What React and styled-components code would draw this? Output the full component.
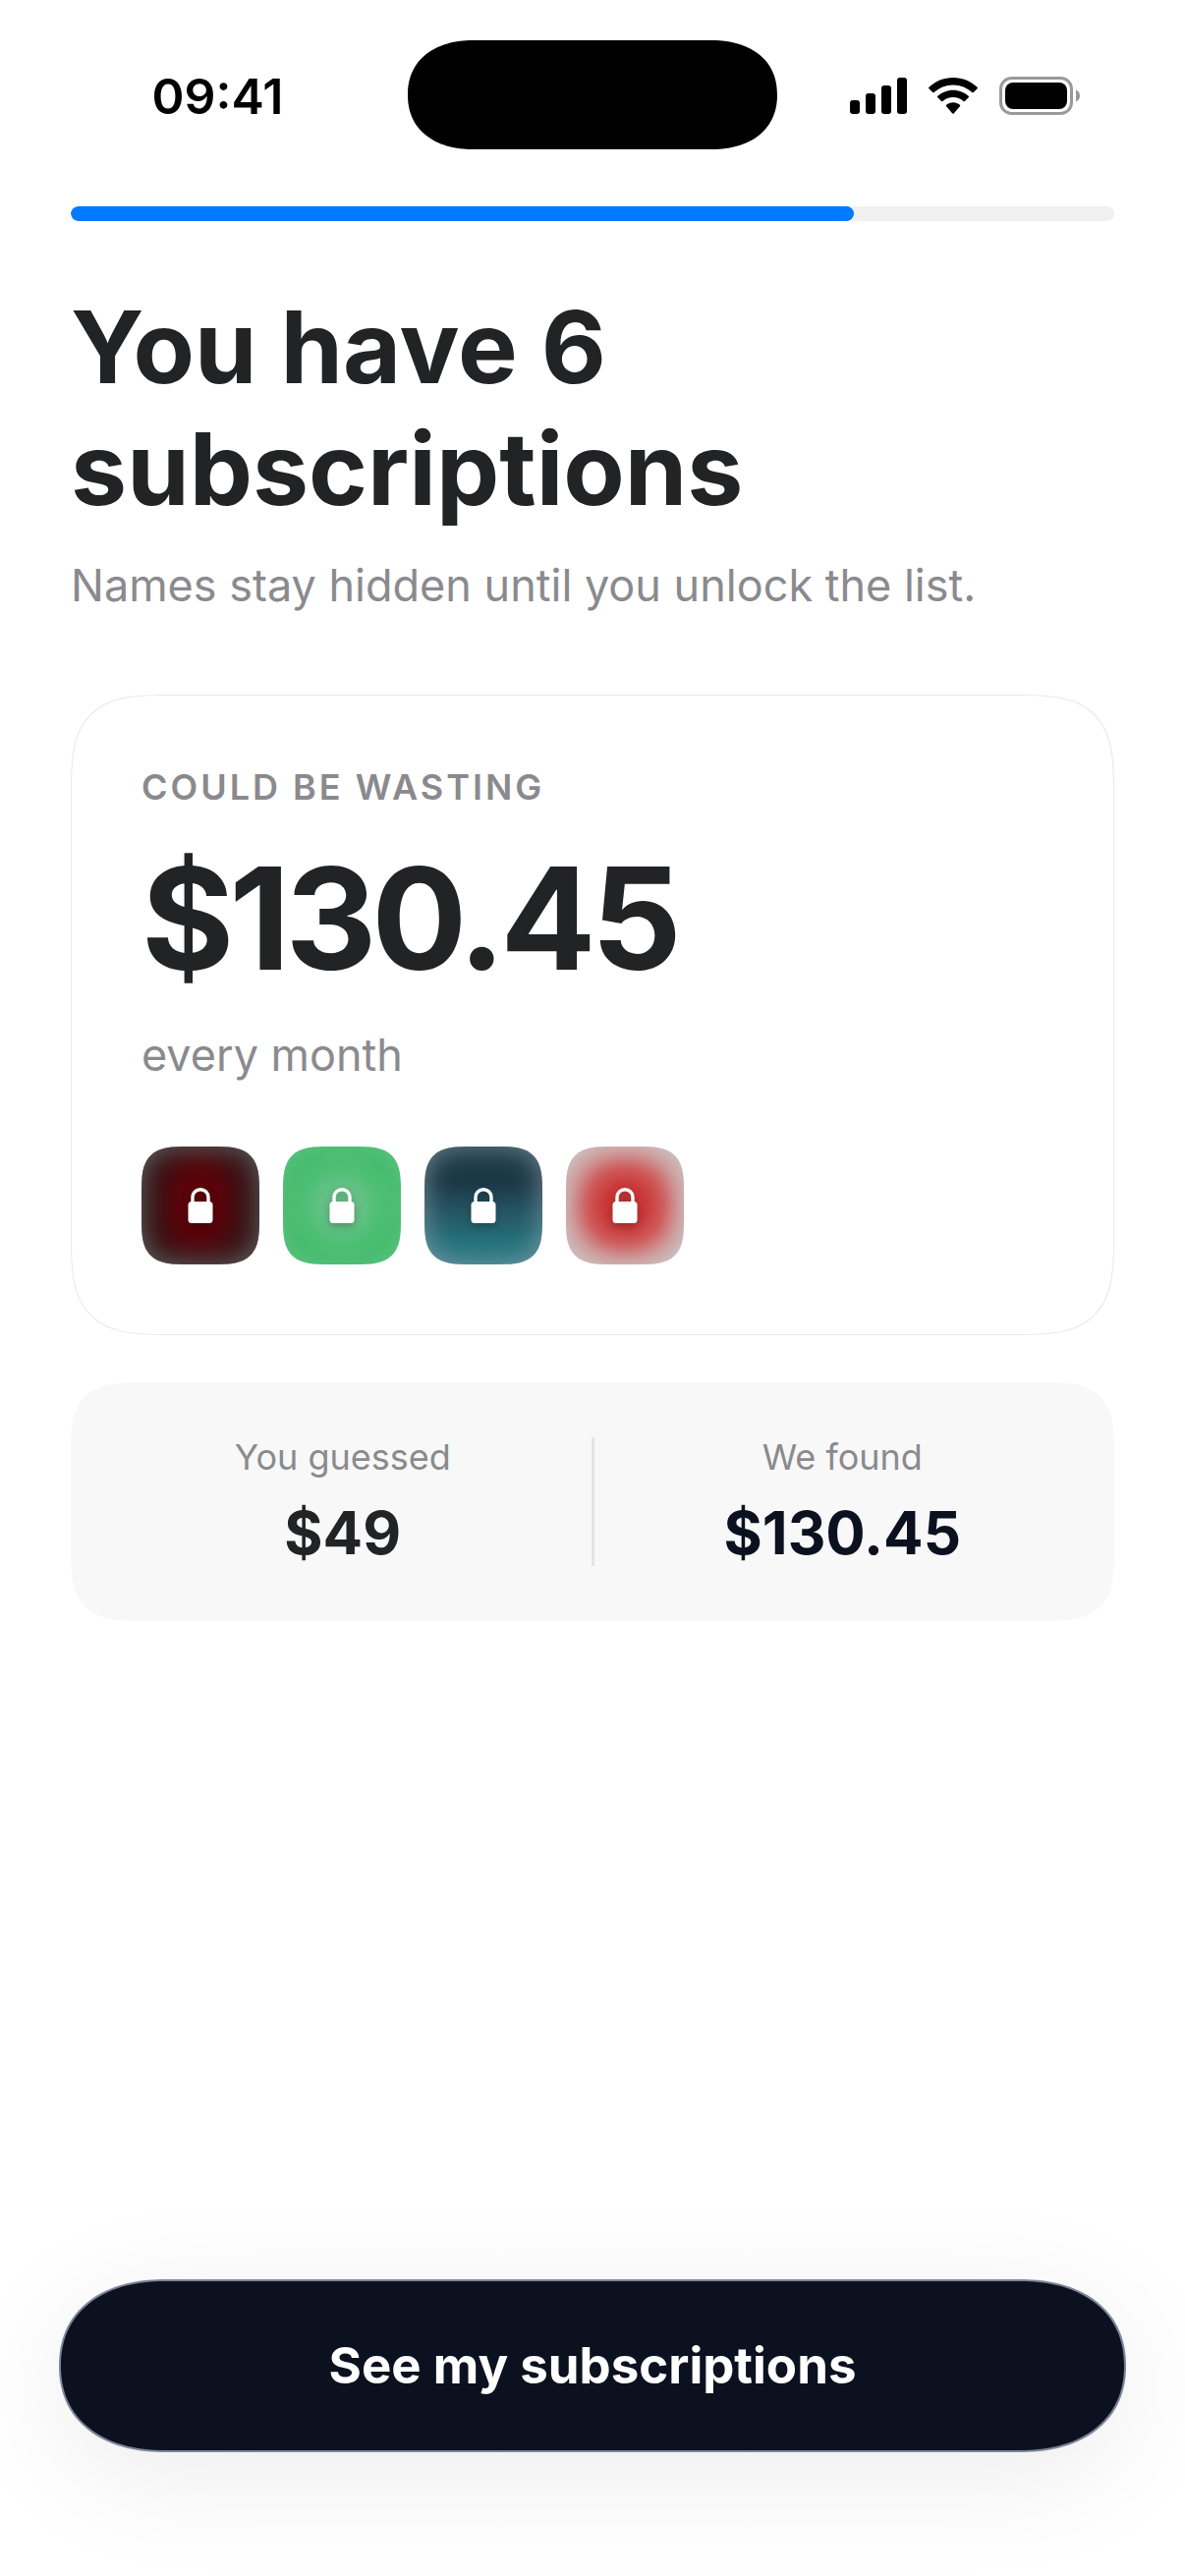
import React from "react";
import styled, { createGlobalStyle } from "styled-components";

const PROGRESS = 75;

const TILES = [
	{
		name: "first",
		fill: "radial-gradient(ellipse 44% 66% at 49% 48%, #5e0006 0%, #58040a 40%, #3e0d10 80%, #360f11 100%)",
		edge: "rgba(95, 105, 105, 1)",
	},
	{
		name: "second",
		fill: "radial-gradient(circle at 50% 50%, #70bf8b 0%, #62c184 26%, #4bbf72 50%, #42bb6b 68%, #48bf70 100%)",
		edge: "rgba(120, 200, 150, 0.5)",
	},
	{
		name: "third",
		fill: "linear-gradient(#1b3846 0%, #1b3846 30%, #265866 58%, #23707a 80%, #2a7883 100%)",
		edge: "rgba(150, 165, 175, 0.7)",
	},
	{
		name: "fourth",
		fill: "radial-gradient(circle at 50% 50%, #c6302f 0%, #cb3a3a 26%, #cf5a5a 46%, #cf9090 66%, #ccb6b6 86%)",
		edge: "rgba(204, 196, 196, 0.8)",
	},
];

const Signal = () => (
	<svg width="58" height="38" viewBox="0 0 58 38">
		<rect x="0" y="23" width="10" height="14" rx="3" />
		<rect x="16" y="16" width="10" height="21" rx="3" />
		<rect x="32" y="8" width="10" height="29" rx="3" />
		<rect x="48" y="0" width="10" height="37" rx="3" />
	</svg>
);

const Wifi = () => (
	<svg width="50" height="38" viewBox="0 0 50 38">
		<path d="M25 0C15.500 0 6.800 3.700 0.400 9.800Q-0.200 10.500 0.400 11.200L4.200 15Q4.900 15.600 5.600 15C10.700 10.300 17.500 7.400 25 7.400S39.300 10.300 44.400 15Q45.100 15.600 45.800 15L49.600 11.200Q50.200 10.500 49.600 9.800C43.200 3.700 34.500 0 25 0Z" />
		<path d="M25 12.700C19 12.700 13.500 15 9.300 18.800Q8.600 19.500 9.300 20.200L13.100 24Q13.800 24.600 14.500 24C17.300 21.500 21 20 25 20S32.700 21.500 35.500 24Q36.200 24.600 36.900 24L40.700 20.200Q41.400 19.500 40.700 18.800C36.500 15 31 12.700 25 12.700Z" />
		<path d="M25 25.200C22.400 25.200 20 26.100 18.100 27.700Q17.400 28.500 18.100 29.200L24.300 36.400Q25 37.100 25.700 36.400L31.900 29.200Q32.600 28.500 31.900 27.700C30 26.100 27.600 25.200 25 25.200Z" />
	</svg>
);

const Battery = () => (
	<svg width="82" height="39" viewBox="0 0 82 39">
		<rect x="1.500" y="1.500" width="72" height="36" rx="11" fill="none" stroke="#999999" strokeWidth="3" />
		<rect x="6" y="6" width="63" height="27" rx="8" />
		<path d="M78 13.500C80.500 14.500 82 16.800 82 19.500S80.500 24.500 78 25.500Z" fill="#999999" />
	</svg>
);

const Lock = () => (
	<svg width="26" height="36" viewBox="0 0 26 36">
		<path d="M5 16V9.500C5 5 8.500 1.700 13 1.700S21 5 21 9.500V16" fill="none" stroke="#fff" strokeWidth="3.400" />
		<rect x="0.500" y="14" width="25" height="22" rx="3.500" fill="#fff" />
	</svg>
);

const App = () => {
	return (
		<>
			<GlobalStyle />
			<Screen>
				<StatusBar>
					<Clock>09:41</Clock>
					<Island />
					<Indicators>
						<Signal />
						<Wifi />
						<Battery />
					</Indicators>
				</StatusBar>
				<Content>
					<Track role="progressbar" aria-valuenow={PROGRESS} aria-label="Progress">
						<Fill style={{ width: `${PROGRESS}%` }} />
					</Track>
					<Title>
						You have 6<br />
						subscriptions
					</Title>
					<Subtitle>Names stay hidden until you unlock the list.</Subtitle>
					<Card>
						<Label>COULD BE WASTING</Label>
						<Amount>$130.45</Amount>
						<Period>every month</Period>
						<Tiles>
							{TILES.map((tile) => (
								<Tile key={tile.name} $fill={tile.fill} $edge={tile.edge}>
									<Lock />
								</Tile>
							))}
						</Tiles>
					</Card>
					<Compare>
						<Side>
							<SideLabel>You guessed</SideLabel>
							<SideValue>$49</SideValue>
						</Side>
						<Divider />
						<Side>
							<SideLabel>We found</SideLabel>
							<SideValue $accent>$130.45</SideValue>
						</Side>
					</Compare>
				</Content>
				<Footer>
					<Button type="button">See my subscriptions</Button>
				</Footer>
			</Screen>
		</>
	);
};

export default App;

const GlobalStyle = createGlobalStyle`
	* {
		box-sizing: border-box;
		margin: 0;
		padding: 0;
	}
	body {
		background-color: #fff;
		font-family: Inter, "Liberation Sans", sans-serif;
		color: #222325;
	}
	svg {
		display: block;
	}
`;

const Screen = styled.div`
	min-height: 100vh;
	display: flex;
	flex-direction: column;
	overflow: hidden;
`;

const StatusBar = styled.header`
	display: grid;
	grid-template-columns: minmax(0, 1fr) 376px minmax(0, 1fr);
	align-items: center;
	padding-top: 41px;
`;

const Clock = styled.div`
	padding-top: 2px;
	padding-left: 28px;
	text-align: center;
	font-size: 50px;
	font-weight: 600;
	line-height: 60px;
	color: #000;
`;

const Island = styled.div`
	height: 111px;
	border-radius: 68px / 56px;
	corner-shape: superellipse(1.16);
	background-color: #000;
`;

const Indicators = styled.div`
	display: flex;
	align-items: center;
	gap: 22px;
	padding-top: 2px;
	padding-left: 74px;
`;

const Content = styled.main`
	flex: 1;
	padding: 58px 72px 0;
`;

const Track = styled.div`
	height: 15px;
	border-radius: 8px;
	background-color: #f0f0f0;
	overflow: hidden;
`;

const Fill = styled.div`
	height: 100%;
	border-radius: 8px;
	background-color: #007bff;
`;

const Title = styled.h1`
	margin-top: 66px;
	font-size: 102px;
	font-weight: 700;
	line-height: 124px;
`;

const Subtitle = styled.p`
	margin-top: 30px;
	font-size: 45px;
	line-height: 54px;
	color: #8a8a8e;
`;

const Card = styled.section`
	margin-top: 84px;
	padding: 71px;
	border: 1px solid #e9e9e9;
	border-radius: 104px;
	corner-shape: superellipse(1.7);
`;

const Label = styled.h2`
	font-size: 36px;
	font-weight: 600;
	line-height: 44px;
	letter-spacing: 3px;
	color: #8a8a8e;
`;

const Amount = styled.p`
	margin-top: 25px;
	font-size: 144px;
	font-weight: 700;
	line-height: 174px;
	letter-spacing: -5px;
`;

const Period = styled.p`
	margin-top: 25px;
	font-size: 45px;
	line-height: 54px;
	color: #8a8a8e;
`;

const Tiles = styled.div`
	display: flex;
	gap: 24px;
	margin-top: 66px;
`;

const Tile = styled.div`
	width: 120px;
	height: 120px;
	display: flex;
	justify-content: center;
	align-items: center;
	border-radius: 48px;
	corner-shape: superellipse(1.7);
	background: ${(props) => props.$fill};
	box-shadow: inset 0 0 28px ${(props) => props.$edge};
	svg {
		filter: drop-shadow(0 3px 4px rgba(0, 0, 0, 0.25));
	}
`;

const Compare = styled.section`
	display: flex;
	margin-top: 48px;
	padding: 54px 24px;
	border-radius: 76px;
	corner-shape: superellipse(1.7);
	background-color: #f8f8f8;
`;

const Side = styled.div`
	flex: 1;
	display: flex;
	flex-direction: column;
	align-items: center;
	gap: 19px;
`;

const SideLabel = styled.p`
	font-size: 36px;
	line-height: 44px;
	color: #8a8a8e;
`;

const SideValue = styled.p`
	font-size: 60px;
	font-weight: 700;
	line-height: 72px;
	color: ${(props) => (props.$accent ? "#0c1120" : "#222325")};
`;

const Divider = styled.div`
	width: 3px;
	margin: 2px 0;
	background-color: #e3e3e3;
`;

const Footer = styled.footer`
	padding: 0 60px 126px;
`;

const Button = styled.button`
	width: 100%;
	height: 176px;
	border: 2px solid #7d8498;
	border-radius: 108px / 88px;
	corner-shape: superellipse(1.16);
	background-color: #0c1120;
	box-shadow: 0 24px 120px rgba(0, 0, 0, 0.08);
	font-family: inherit;
	font-size: 51px;
	font-weight: 700;
	line-height: 62px;
	color: #fff;
	cursor: pointer;
`;
